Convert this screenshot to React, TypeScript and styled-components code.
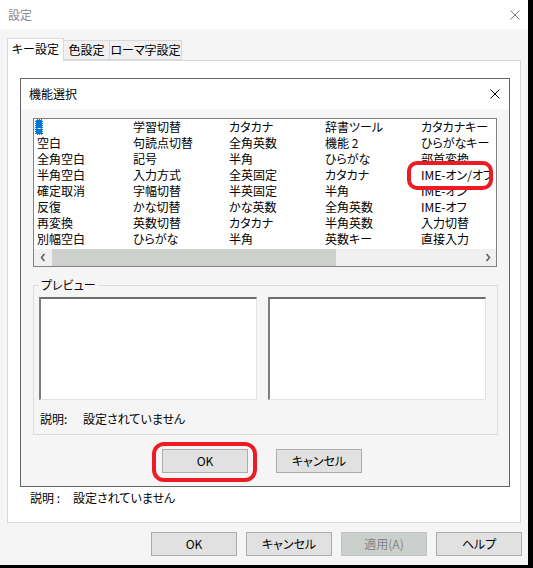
import React from "react";
import styled, { createGlobalStyle } from "styled-components";

const Global = createGlobalStyle`
  html, body { margin: 0; padding: 0; background: #000; }
  body {
    font-family: "Noto Sans CJK JP", "Noto Sans", sans-serif;
    font-size: 12px;
    color: #000;
    font-feature-settings: "palt";
  }
  * { box-sizing: border-box; }
`;

const Root = styled.div`
  width: 533px;
  height: 568px;
  background: #000;
  display: flex;
  align-items: flex-start;
`;

const Window = styled.div`
  position: relative;
  width: 528px;
  height: 565px;
  background: #f5f5f5;
  display: flex;
  flex-direction: column;
`;

const TitleBar = styled.div`
  height: 29px;
  background: #fff;
  display: flex;
  align-items: center;
  padding-left: 8px;
  padding-right: 8px;
  line-height: 16px;
`;

const TitleText = styled.span<{ $muted?: boolean }>`
  color: ${(p) => (p.$muted ? "#8a8a8a" : "#000")};
  flex: 1;
`;

const CloseBox = styled.span<{ $right: number }>`
  display: flex;
  width: 10px;
  height: 10px;
  margin-right: ${(p) => p.$right}px;
`;

const Body = styled.div`
  flex: 1;
  display: flex;
  flex-direction: column;
  padding: 9px 0 0 7px;
`;

const TabStrip = styled.div`
  height: 22px;
  display: flex;
  align-items: flex-end;
`;

const Tab = styled.div<{ $active?: boolean; $w: number; $first?: boolean }>`
  width: ${(p) => p.$w}px;
  height: ${(p) => (p.$active ? 23 : 20)}px;
  margin-bottom: ${(p) => (p.$active ? -1 : 0)}px;
  background: ${(p) => (p.$active ? "#fff" : "#f0f0f0")};
  border: 1px solid #d9d9d9;
  border-left-width: ${(p) => (p.$first ? 1 : 0)}px;
  border-bottom: ${(p) => (p.$active ? "none" : "1px solid #d9d9d9")};
  display: flex;
  align-items: center;
  justify-content: center;
  line-height: 16px;
  padding-bottom: ${(p) => (p.$active ? 2 : 0)}px;
  position: relative;
  z-index: ${(p) => (p.$active ? 1 : 0)};
  white-space: nowrap;
`;

const TabPanel = styled.div`
  width: 514px;
  height: 463px;
  background: #fff;
  border: 1px solid #d9d9d9;
  padding: 17px 0 0 12px;
  display: flex;
  flex-direction: column;
`;

const Dialog = styled.div`
  width: 490px;
  height: 409px;
  border: 1px solid #646464;
  display: flex;
  flex-direction: column;
`;

const DialogTitle = styled(TitleBar)`
  height: 30px;
  padding-right: 0;
`;

const DialogBody = styled.div`
  flex: 1;
  background: #f5f5f5;
  padding: 9px 0 0 12px;
  display: flex;
  flex-direction: column;
`;

const ListBox = styled.div`
  width: 464px;
  height: 149px;
  border: 1px solid #828282;
  background: #fff;
  display: flex;
  flex-direction: column;
  overflow: hidden;
`;

const ItemGrid = styled.div`
  height: 130px;
  padding-left: 1px;
  display: grid;
  grid-template-columns: repeat(5, 96px);
  grid-auto-rows: 16px;
  overflow: hidden;
`;

const Item = styled.div`
  line-height: 16px;
  white-space: nowrap;
  padding-left: 2px;
`;

const SelectedItem = styled.span`
  display: inline-block;
  margin-left: -2px;
  padding: 0 2px;
  min-width: 8px;
  height: 16px;
  background: #0078d7;
  color: #fff;
  outline: 1px dotted #fff;
  outline-offset: -1px;
`;

const ScrollBar = styled.div`
  height: 17px;
  background: #f0f0f0;
  display: flex;
  align-items: stretch;
`;

const ScrollArrow = styled.div`
  width: 17px;
  display: flex;
  align-items: center;
  justify-content: center;
`;

const ScrollThumb = styled.div`
  width: 284px;
  background: #cdd0cd;
  margin-left: 1px;
`;

const ScrollSpacer = styled.div`
  flex: 1;
`;

const Group = styled.div`
  position: relative;
  margin-top: 18px;
  width: 465px;
  height: 150px;
  border: 1px solid #dcdcdc;
  padding: 11px 0 0 5px;
  display: flex;
  flex-direction: column;
`;

const Legend = styled.span`
  position: absolute;
  top: -9px;
  left: 5px;
  padding: 0 2px;
  background: #f5f5f5;
  line-height: 16px;
`;

const PreviewRow = styled.div`
  display: flex;
  gap: 11px;
`;

const PreviewBox = styled.div`
  width: 218px;
  height: 103px;
  background: #fff;
  border-style: solid;
  border-width: 2px 1px 1px 2px;
  border-color: #6e6e6e #e3e3e3 #e3e3e3 #7d7d7d;
`;

const DescRow = styled.div<{ $gap: number }>`
  display: flex;
  line-height: 16px;
  white-space: nowrap;
  & > span:first-child {
    width: ${(p) => p.$gap}px;
  }
`;

const GroupDesc = styled(DescRow)`
  margin-top: 11px;
  padding-left: 1px;
`;

const DialogButtons = styled.div`
  margin-top: 14px;
  margin-left: 129px;
  display: flex;
  gap: 28px;
`;

const Button = styled.button<{ $disabled?: boolean }>`
  width: 86px;
  height: 24px;
  padding: 0;
  font-family: inherit;
  font-size: 12px;
  font-feature-settings: "palt";
  line-height: 16px;
  background: ${(p) => (p.$disabled ? "#ccd0cc" : "#e1e1e1")};
  color: ${(p) => (p.$disabled ? "#838383" : "#000")};
  border: 1px solid ${(p) => (p.$disabled ? "#bfc3bf" : "#adadad")};
  display: flex;
  align-items: center;
  justify-content: center;
`;

const PanelDesc = styled(DescRow)`
  margin-top: 3px;
  padding-left: 10px;
`;

const FooterButtons = styled.div`
  margin-top: 9px;
  padding-right: 6px;
  display: flex;
  justify-content: flex-end;
  gap: 9px;
`;

const Annotation = styled.div<{ $x: number; $y: number; $w: number; $h: number; $r: number }>`
  position: absolute;
  left: ${(p) => p.$x}px;
  top: ${(p) => p.$y}px;
  width: ${(p) => p.$w}px;
  height: ${(p) => p.$h}px;
  border: 4px solid #ed1c24;
  border-radius: ${(p) => p.$r}px;
  pointer-events: none;
`;

const CloseIcon = ({ color }: { color: string }) => (
  <svg width="10" height="10" viewBox="0 0 10 10">
    <path d="M0.5 0.5 L9.5 9.5 M9.5 0.5 L0.5 9.5" stroke={color} strokeWidth="1" fill="none" />
  </svg>
);

const Chevron = ({ dir }: { dir: "l" | "r" }) => (
  <svg width="6" height="9" viewBox="0 0 6 9">
    <path
      d={dir === "l" ? "M4.5 1 L1.5 4.5 L4.5 8" : "M1.5 1 L4.5 4.5 L1.5 8"}
      stroke="#606060"
      strokeWidth="1.6"
      fill="none"
    />
  </svg>
);

const rows: string[][] = [
  ["-", "学習切替", "カタカナ", "辞書ツール", "カタカナキー"],
  ["空白", "句読点切替", "全角英数", "機能 2", "ひらがなキー"],
  ["全角空白", "記号", "半角", "ひらがな", "部首変換"],
  ["半角空白", "入力方式", "全英固定", "カタカナ", "IME-オン/オフ"],
  ["確定取消", "字幅切替", "半英固定", "半角", "IME-オン"],
  ["反復", "かな切替", "かな英数", "全角英数", "IME-オフ"],
  ["再変換", "英数切替", "カタカナ", "半角英数", "入力切替"],
  ["別幅空白", "ひらがな", "半角", "英数キー", "直接入力"],
];

export default function App() {
  return (
    <>
      <Global />
      <Root>
        <Window>
          <TitleBar>
            <TitleText $muted>設定</TitleText>
            <CloseBox $right={0}>
              <CloseIcon color="#7a7a7a" />
            </CloseBox>
          </TitleBar>
          <Body>
            <TabStrip>
              <Tab $active $first $w={57}>キー設定</Tab>
              <Tab $w={46}>色設定</Tab>
              <Tab $w={72}>ローマ字設定</Tab>
            </TabStrip>
            <TabPanel>
              <Dialog>
                <DialogTitle>
                  <TitleText>機能選択</TitleText>
                  <CloseBox $right={9}>
                    <CloseIcon color="#000" />
                  </CloseBox>
                </DialogTitle>
                <DialogBody>
                  <ListBox>
                    <ItemGrid>
                      {rows.flatMap((r, ri) =>
                        r.map((c, ci) => (
                          <Item key={`${ri}-${ci}`}>
                            {ri === 0 && ci === 0 ? <SelectedItem>{c}</SelectedItem> : c}
                          </Item>
                        ))
                      )}
                    </ItemGrid>
                    <ScrollBar>
                      <ScrollArrow>
                        <Chevron dir="l" />
                      </ScrollArrow>
                      <ScrollThumb />
                      <ScrollSpacer />
                      <ScrollArrow>
                        <Chevron dir="r" />
                      </ScrollArrow>
                    </ScrollBar>
                  </ListBox>
                  <Group>
                    <Legend>プレビュー</Legend>
                    <PreviewRow>
                      <PreviewBox />
                      <PreviewBox />
                    </PreviewRow>
                    <GroupDesc $gap={43}>
                      <span>説明:</span>
                      <span>設定されていません</span>
                    </GroupDesc>
                  </Group>
                  <DialogButtons>
                    <Button>OK</Button>
                    <Button>キャンセル</Button>
                  </DialogButtons>
                </DialogBody>
              </Dialog>
              <PanelDesc $gap={43}>
                <span>説明 :</span>
                <span>設定されていません</span>
              </PanelDesc>
            </TabPanel>
            <FooterButtons>
              <Button>OK</Button>
              <Button>キャンセル</Button>
              <Button $disabled>適用(A)</Button>
              <Button>ヘルプ</Button>
            </FooterButtons>
          </Body>
          <Annotation $x={407} $y={161} $w={86} $h={29} $r={10} />
          <Annotation $x={152} $y={442} $w={105} $h={40} $r={12} />
        </Window>
      </Root>
    </>
  );
}
